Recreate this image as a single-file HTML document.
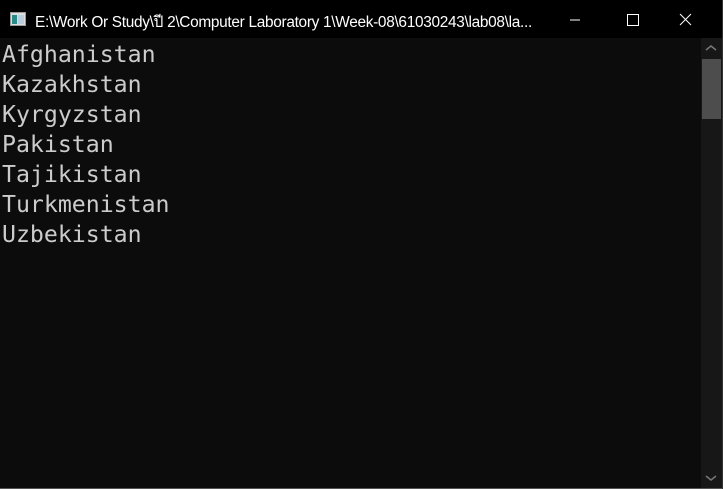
<!DOCTYPE html><html><head><style>
body{margin:0;width:723px;height:489px;background:#0c0c0c;overflow:hidden;position:relative;font-family:"Liberation Sans",sans-serif}
.t{position:absolute;left:0;top:0;width:723px;height:38px;background:#000}
.ti{position:absolute;left:35px;top:9px;color:#fff;font-size:15.4px;font-family:"Liberation Sans","Noto Sans CJK SC",sans-serif;letter-spacing:-0.3px;white-space:nowrap}
.c{position:absolute;left:2px;top:40px;color:#cccccc;font-family:"DejaVu Sans Mono",monospace;font-size:23.2px;line-height:30px;white-space:pre}
.sb{position:absolute;left:701px;top:38px;width:21px;height:450px;background:#171717}
.th{position:absolute;left:702px;top:59px;width:19px;height:60px;background:#4d4d4d}
.bd{position:absolute;left:0;top:488px;width:723px;height:1px;background:#555}
.bl{position:absolute;left:722px;top:0;width:1px;height:489px;background:#333}
</style></head><body>
<div class="t">
<svg style="position:absolute;left:10px;top:12px" width="16" height="14"><rect x="0.5" y="0.5" width="15" height="13" fill="#ddd" stroke="#999"/><rect x="2" y="3" width="5" height="9" fill="#2a8a8a"/><rect x="8" y="3" width="6" height="9" fill="#bcd"/></svg>
<div class="ti">E:\Work Or Study\ปี 2\Computer Laboratory 1\Week-08\61030243\lab08\la...</div>
<svg style="position:absolute;left:570px;top:12px" width="130" height="16"><line x1="0" y1="8" x2="10" y2="8" stroke="#fff"/><rect x="57.5" y="2.5" width="11" height="11" fill="none" stroke="#fff"/><path d="M110 2L121 13M121 2L110 13" stroke="#fff"/></svg>
</div>
<div class="c">Afghanistan
Kazakhstan
Kyrgyzstan
Pakistan
Tajikistan
Turkmenistan
Uzbekistan</div>
<div class="sb"></div><div class="th"></div>
<svg style="position:absolute;left:705px;top:44px" width="12" height="8"><path d="M1 6L6 2L11 6" stroke="#777" stroke-width="1.5" fill="none"/></svg>
<svg style="position:absolute;left:705px;top:474px" width="12" height="8"><path d="M1 2L6 6L11 2" stroke="#777" stroke-width="1.5" fill="none"/></svg>
<div class="bd"></div><div class="bl"></div>
</body></html>
